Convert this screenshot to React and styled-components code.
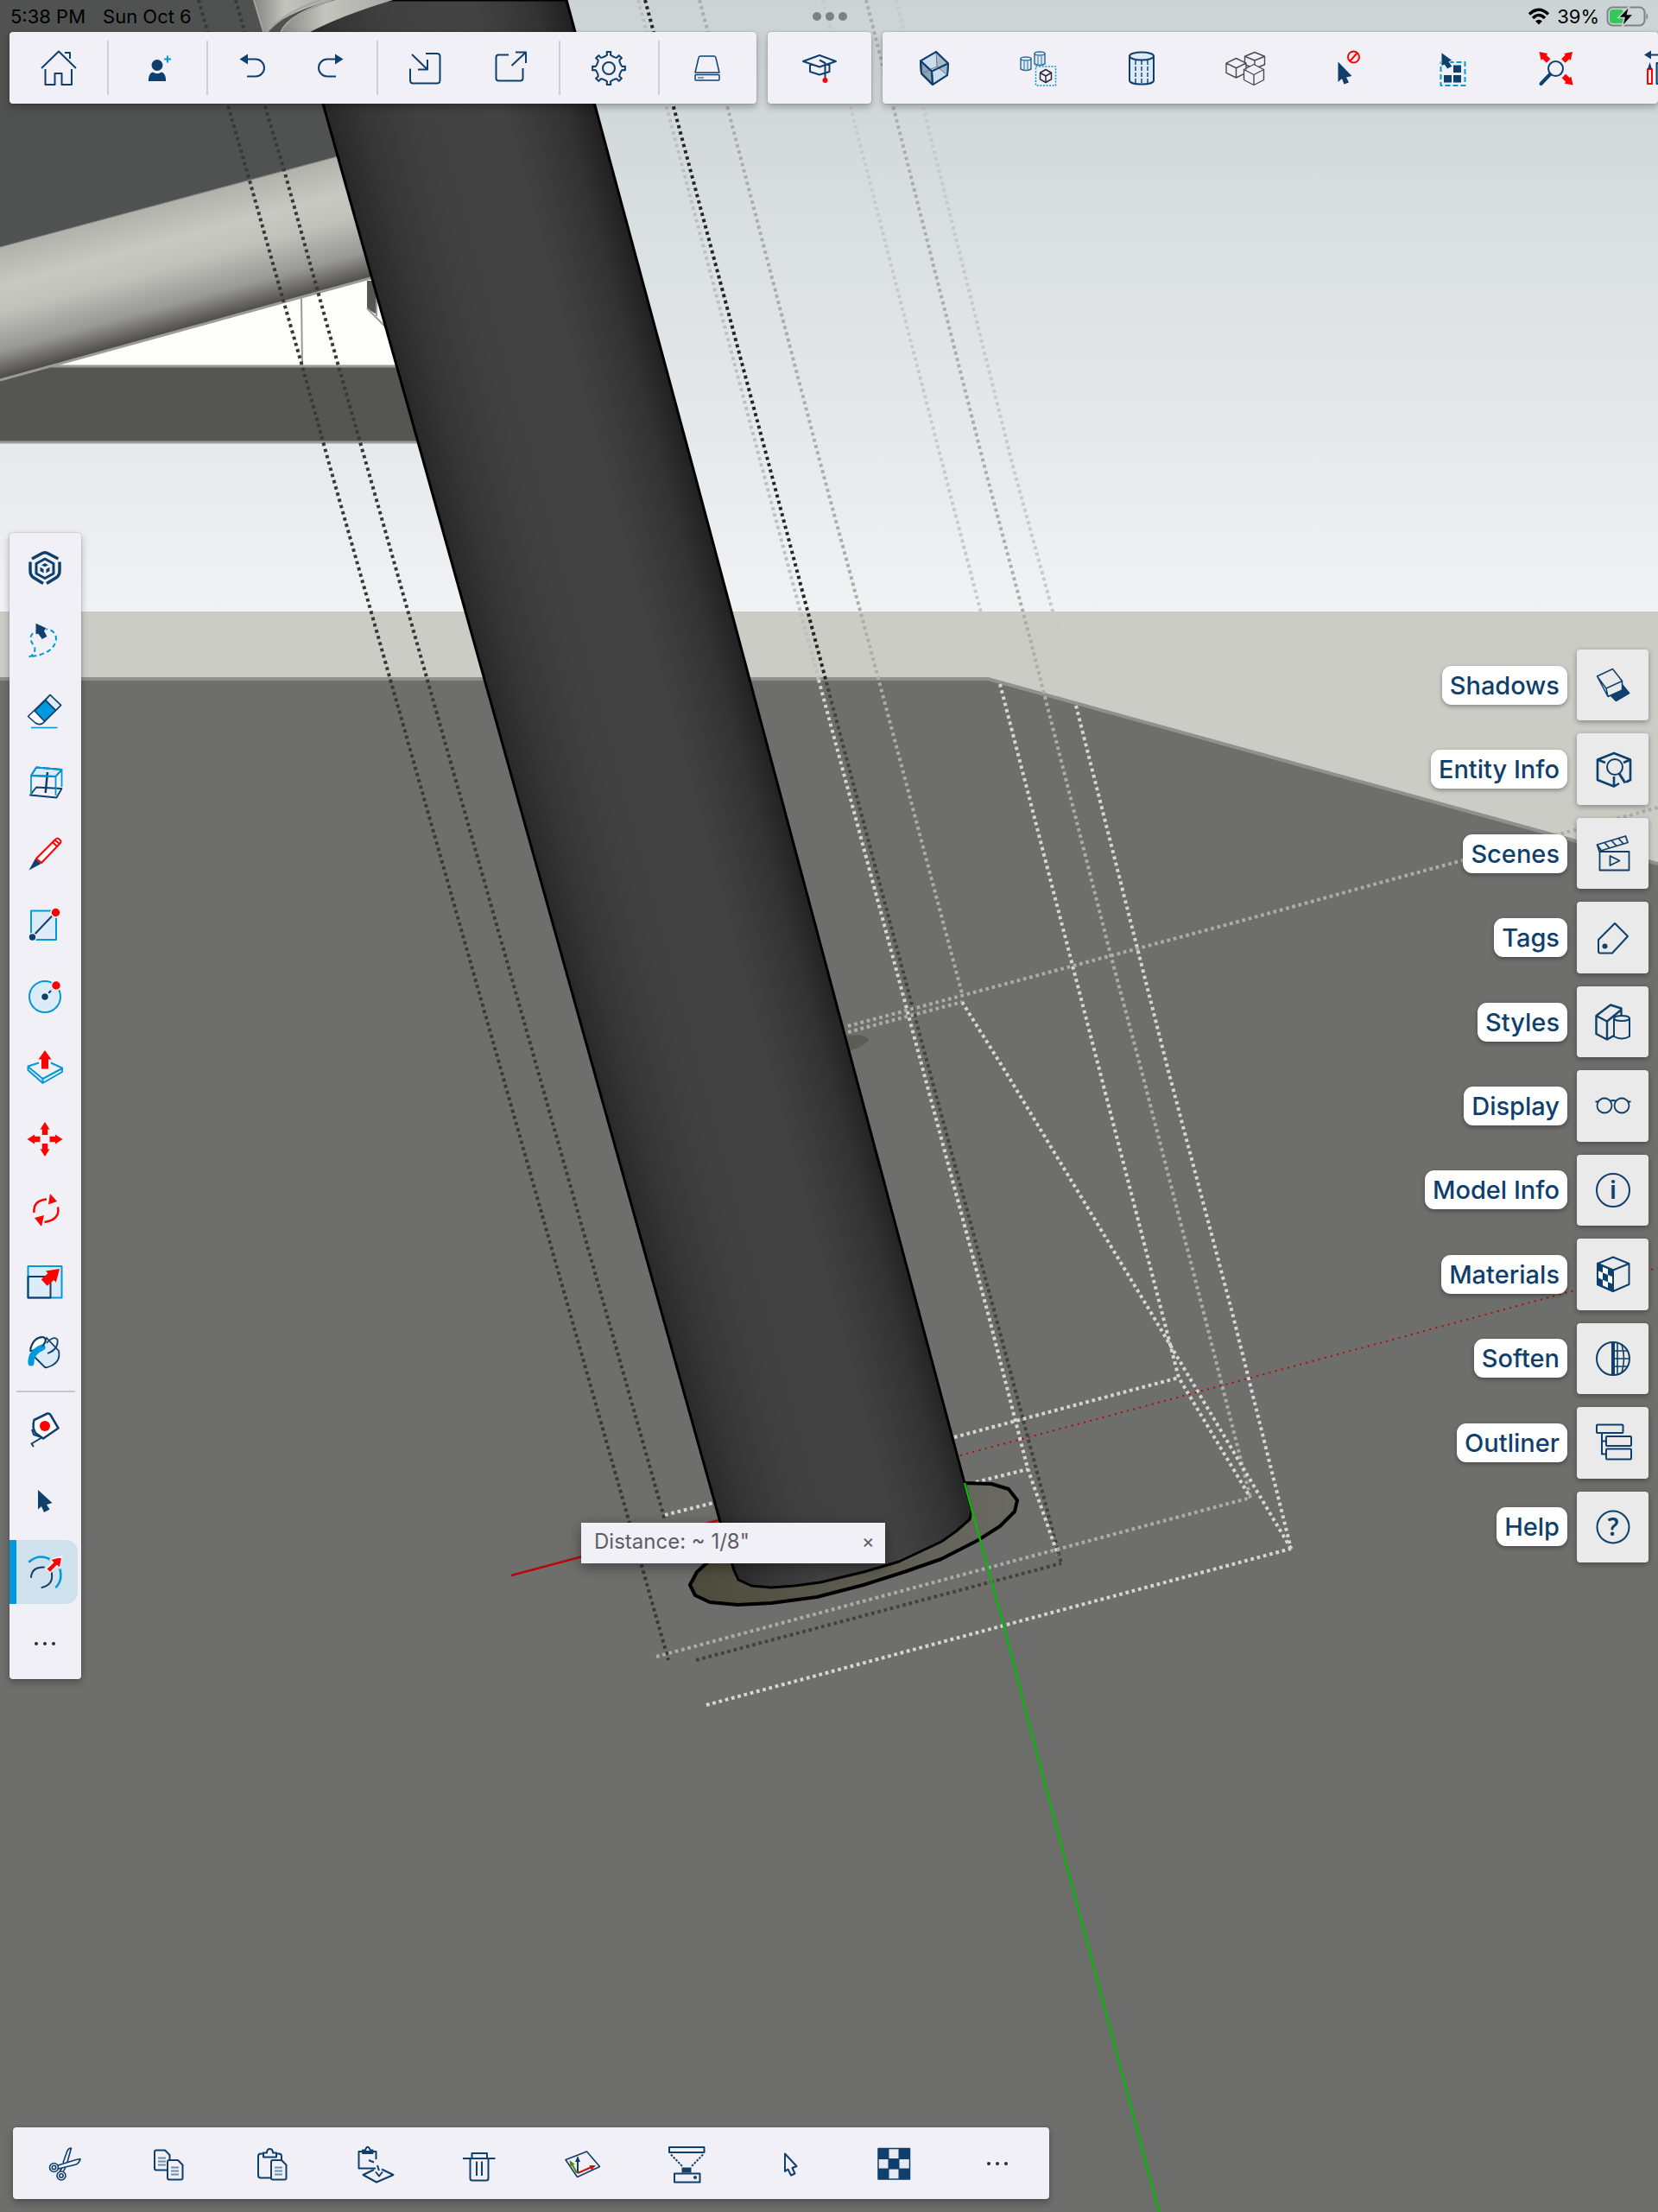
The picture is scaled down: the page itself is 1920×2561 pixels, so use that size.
import React from 'react';
import styled, { createGlobalStyle, css } from 'styled-components';

const NAVY = '#0f3f6c';
const BLUE = '#0099db';
const RED = '#ff0000';
const PALE = '#dbebf7';
const PANEL = '#f1f0f6';

const GlobalStyle = createGlobalStyle`
  * { box-sizing: border-box; }
  html, body { margin: 0; padding: 0; }
  body { font-family: Inter, "Liberation Sans", sans-serif; color: ${NAVY}; }
  button { font: inherit; color: inherit; border: 0; background: none; padding: 0; margin: 0; cursor: pointer; }
`;

/* ---------- layout ---------- */

const Page = styled.div`
  position: relative;
  display: flex;
  flex-direction: column;
  min-height: 100vh;
  overflow: hidden;
  background: #6e6e6c;
`;

const Viewport = styled.svg`
  position: absolute;
  inset: 0;
  width: 100%;
  height: 100%;
`;

const StatusBar = styled.header`
  position: relative;
  display: grid;
  grid-template-columns: 1fr auto 1fr;
  align-items: center;
  height: 37px;
  padding: 0 10px 0 12px;
  font-size: 22px;
  color: #000;
`;

const StatusLeft = styled.div`
  display: flex;
  gap: 20px;
`;

const StatusRight = styled.div`
  display: flex;
  align-items: center;
  justify-content: flex-end;
  gap: 8px;
`;

const Multitask = styled.div`
  display: flex;
  gap: 5px;
`;

const MultitaskDot = styled.span`
  width: 10px;
  height: 10px;
  border-radius: 50%;
  background: #7a8184;
`;

const panel = css`
  background: ${PANEL};
  border-radius: 4px;
  box-shadow: 0 4px 8px rgba(0, 0, 0, 0.28), 0 0 2px rgba(0, 0, 0, 0.25);
`;

const TopBars = styled.div`
  position: relative;
  display: flex;
  gap: 13px;
  padding-left: 11px;
`;

const Toolbar = styled.nav`
  ${panel}
  display: flex;
  align-items: center;
  height: 83px;
  flex: ${(p) => (p.$fill ? '1 1 0' : 'none')};
  min-width: 0;
  overflow: ${(p) => (p.$fill ? 'hidden' : 'visible')};
`;

const ToolGroup = styled.div`
  display: flex;
  justify-content: center;
  align-items: center;
  width: ${(p) => p.$width}px;
  height: 63px;
  & + & { box-shadow: inset 2px 0 #cfcfd6; }
`;

const ToolButton = styled.button`
  display: flex;
  flex: none;
  align-items: center;
  justify-content: center;
  width: ${(p) => p.$width || 120}px;
  height: 63px;
`;

const Main = styled.main`
  position: relative;
  display: flex;
  flex: 1;
  align-items: center;
  justify-content: space-between;
  padding: 0 11px 22px;
`;

const Rail = styled.nav`
  ${panel}
  display: flex;
  flex-direction: column;
  width: 83px;
  height: 1327px;
`;

const RailButton = styled.button`
  display: flex;
  flex: 1;
  align-items: center;
  padding: 4px 0;
`;

const RailFace = styled.span`
  display: flex;
  align-items: center;
  width: 79px;
  height: 100%;
  padding-left: 9px;
  border-left: 8px solid ${(p) => (p.$active ? BLUE : 'transparent')};
  border-radius: 0 14px 14px 0;
  background: ${(p) => (p.$active ? '#cfe1ec' : 'transparent')};
`;

const RailDivider = styled.hr`
  width: 68px;
  height: 2px;
  margin: 2px auto;
  border: 0;
  background: #c6c6cc;
`;

const Trays = styled.nav`
  display: grid;
  grid-auto-rows: 1fr;
  gap: 15px;
  height: 1057px;
`;

const Tray = styled.button`
  display: flex;
  align-items: center;
  justify-content: flex-end;
  gap: 11px;
`;

const TrayLabel = styled.span`
  padding: 0 9px;
  border-radius: 11px;
  background: #fff;
  box-shadow: 0 2px 5px rgba(0, 0, 0, 0.35);
  font-size: 29px;
  font-weight: 500;
  line-height: 45px;
`;

const TrayIcon = styled.span`
  display: flex;
  align-items: center;
  justify-content: center;
  width: 83px;
  height: 100%;
  border-radius: 4px;
  background: #eaeaea;
  box-shadow: 0 2px 6px rgba(0, 0, 0, 0.35);
`;

const BottomBar = styled.footer`
  position: relative;
  display: flex;
  padding: 0 15px 15px;
`;

const Measurement = styled.div`
  position: absolute;
  left: 673px;
  top: 1763px;
  display: flex;
  align-items: center;
  justify-content: space-between;
  width: 352px;
  height: 47px;
  padding: 0 13px 5px 15px;
  background: ${PANEL};
  box-shadow: 0 4px 16px rgba(0, 0, 0, 0.4);
  font-size: 24px;
  color: #5d5c68;
`;

const CloseButton = styled.button`
  width: 14px;
  font-size: 22px;
`;

/* ---------- icons ---------- */

const Svg = styled.svg`
  display: block;
  width: 48px;
  height: 48px;
  overflow: visible;
  fill: none;
  stroke: ${NAVY};
  stroke-width: ${(p) => p.$weight};
  stroke-linejoin: round;
`;

const Icon = ({ children, weight = 2 }) => (
  <Svg viewBox="0 0 48 48" aria-hidden="true" $weight={weight}>{children}</Svg>
);

const gearPath = (() => {
  const pts = [];
  for (let i = 0; i < 8; i++) {
    const a = (i * Math.PI) / 4 - Math.PI / 2;
    [[-0.27, 14.5], [-0.13, 15.5], [-0.12, 19], [0.12, 19], [0.13, 15.5], [0.27, 14.5]].forEach(([d, r]) => {
      pts.push(`${(24 + r * Math.cos(a + d)).toFixed(1)} ${(24 + r * Math.sin(a + d)).toFixed(1)}`);
    });
  }
  return `M${pts.join('L')}Z`;
})();

const Hex = ({ cx, top, w, h, ...rest }) => {
  const q = h / 4;
  return (
    <path
      {...rest}
      d={`M${cx - w} ${top + q}L${cx} ${top}L${cx + w} ${top + q}V${top + 3 * q}L${cx} ${top + h}L${cx - w} ${top + 3 * q}ZM${cx - w} ${top + q}L${cx} ${top + 2 * q}L${cx + w} ${top + q}M${cx} ${top + 2 * q}V${top + h}`}
    />
  );
};

const Arrow = ({ x, y, deg, size = 1 }) => (
  <path
    transform={`translate(${x} ${y}) rotate(${deg}) scale(${size})`}
    d="M0 0L5.500 8.500H3.200V15H-3.200V8.500H-5.500Z"
    fill={RED}
    stroke="none"
  />
);

const Dots = () => (
  <Icon>
    <g fill="#2b2b3a" stroke="none">
      <circle cx="14" cy="24" r="2" /><circle cx="24" cy="24" r="2" /><circle cx="34" cy="24" r="2" />
    </g>
  </Icon>
);

const icons = {
  home: <Icon><path d="M4 24L24 4.500L44 24M31 6H37V13M8.500 25V43H19.500V30H27.500V43H39V25" /></Icon>,
  invite: <Icon><g fill={NAVY} stroke="none"><circle cx="24" cy="20.500" r="6.500" /><path d="M14 39V36Q15 29 19 28.500Q24 32 29 28.500Q33 29 34 36V39Z" /></g><path d="M36 9.500V17.500M32 13.500H40" stroke={BLUE} /></Icon>,
  undo: <Icon><path d="M9.500 13.500L19 7.500V19.500Z" fill={NAVY} stroke="none" /><path d="M18 13.500H28A10 10 0 0 1 28 33.500H18" /></Icon>,
  redo: <Icon><path d="M38.500 13.500L29 7.500V19.500Z" fill={NAVY} stroke="none" /><path d="M30 13.500H20A10 10 0 0 0 20 33.500H30" /></Icon>,
  importFile: <Icon><path d="M25 7H38Q41.500 7 41.500 10.500V38Q41.500 41.500 38 41.500H10.500Q7 41.500 7 38V24.500M9 8L26.500 25M27 14V25.500H16" /></Icon>,
  exportFile: <Icon><path d="M22 8.500H10.500Q7.500 8.500 7.500 11.500V35.500Q7.500 38.500 10.500 38.500H35.500Q38.500 38.500 38.500 35.500V24M25.500 21L42 5.500M30 5.500H42V18" /></Icon>,
  gear: <Icon><path d={gearPath} /><circle cx="24" cy="24" r="7" /></Icon>,
  drive: <Icon weight={1.5}><path d="M14 12Q14.500 10 16 10H32Q33.500 10 34 12L38 29H10Z" /><rect x="10" y="31.500" width="28" height="6.500" rx="1" /><path d="M13 35H20" strokeWidth="1" /></Icon>,
  learn: <Icon><path d="M5 16L24 9L43 16L24 22.500ZM13 19V28L24 31.500L35.500 28V19" /><path d="M24 14.500L30.500 18V37" /><circle cx="30.500" cy="38" r="3" fill={RED} stroke="none" /></Icon>,
  xray: <Icon><path d="M8 15.500L26 5L40 18.500L39 32L22 43L9 30Z" fill="#c9dded" /><path d="M8 15.500L21 27.500L22 43L9 30Z" fill="#8ba3b6" /><path d="M26 5L40 18.500L39 32L27 22Z" fill="#a5bacb" stroke="none" /><path d="M26 5L27 22L39 32M27 22L9 30" strokeWidth="1" stroke="#777" /><path d="M8 15.500L21 27.500L40 18.500M21 27.500L22 43M8 15.500L26 5L40 18.500L39 32L22 43L9 30Z" /></Icon>,
  hideRest: <Icon weight={1.5}>
    {[[4, 13], [20, 7]].map(([x, y]) => (
      <g key={x} fill={PALE} stroke="#376d96"><path d={`M${x} ${y}V${y + 12}Q${x + 6} ${y + 15} ${x + 12} ${y + 12}V${y}`} /><ellipse cx={x + 6} cy={y} rx="6" ry="2" /><path d={`M${x + 4} ${y + 3}V${y + 12}M${x + 8} ${y + 3}V${y + 12}`} strokeWidth="1" /></g>
    ))}
    <rect x="21.500" y="22" width="23" height="22" stroke={BLUE} strokeDasharray="2 1.600" /><Hex cx={33} top={25.5} w={6.5} h={15} stroke="#2b2b3a" />
  </Icon>,
  hiddenGeometry: <Icon><path d="M10 10V38C10 44 38 44 38 38V10" fill={PALE} /><ellipse cx="24" cy="10" rx="14" ry="4.500" fill={PALE} /><path d="M17 15V41M24 15V42M31 15V41" strokeDasharray="5 2" strokeWidth="1.400" /></Icon>,
  components: <Icon>
    <g fill={PANEL} stroke="#4a4a55" strokeWidth="1.400"><Hex cx={35} top={5.5} w={11.500} h={19} /><Hex cx={13.5} top={12.5} w={11.500} h={22.5} /><Hex cx={34} top={19.5} w={11.500} h={24} /></g>
  </Icon>,
  deselect: <Icon><path d="M11.500 16.500V40L16 36L18.500 42.500L24 40.500L21 34.500L27.500 33Z" fill={NAVY} stroke="none" /><circle cx="29.500" cy="11" r="6.500" stroke={RED} /><path d="M25 16L34 6" stroke={RED} /></Icon>,
  selectAll: <Icon><rect x="10.500" y="17" width="28" height="27" stroke={BLUE} strokeDasharray="6 3" /><g fill={NAVY} stroke="none"><rect x="25" y="20.500" width="9" height="8.500" /><rect x="14" y="32" width="9" height="8.500" /><rect x="25" y="32" width="9" height="8.500" /></g><path d="M11 5.500V22L14.500 20L18 25L24 22L20 16.500L24 15Z" fill={NAVY} stroke={PANEL} strokeWidth="1" /></Icon>,
  zoomExtents: <Icon><circle cx="23.500" cy="24.500" r="8.500" /><path d="M17 31L6.500 42" strokeWidth="4" strokeLinecap="round" /><Arrow x={4.5} y={5} deg={-45} /><Arrow x={43} y={5} deg={45} /><Arrow x={43.5} y={43.500} deg={135} /></Icon>,
  catalogue: <Icon><path d="M6 8.500L14 3.500V13.500Z" fill={NAVY} stroke="none" /><path d="M12 8.500H36" /><rect x="10" y="25" width="5" height="17" stroke={RED} /><path d="M12.500 17L15 25H10Z" fill={NAVY} stroke="none" /><rect x="20.500" y="18" width="20" height="24" fill="#7cc4ea" /></Icon>,

  logo: <Icon weight={3.5}><path d="M9 13L20 7Q24 4.500 28 7L39.500 13M7 16.500V27Q7 32 10.500 34.500L22 41.500M41 16.500V27Q41 32 37.500 34.500L26 41.500" /><path d="M24 13L34 18.500V30L24 35.500L14 30V18.500Z" strokeWidth="3" /><path fill={NAVY} stroke="none" d="M24 18L28 20.200L24 22.300L20 20.200ZM18.500 22.500L22.500 25V29.500L18.500 27ZM29.500 22.500L25.500 25V29.500L29.500 27Z" /></Icon>,
  lasso: <Icon><path d="M5.500 43.500Q14 41 12 31Q6 25 8 19Q12 12 24 11Q36 12 37 22Q36 40 5.500 43.500" stroke={BLUE} strokeDasharray="5.500 3.500" /><path d="M13 4V18L16 17L20.700 23.500L27 20L23.500 13.500L26 10Z" fill={NAVY} stroke={PANEL} strokeWidth="1" /></Icon>,
  eraser: <Icon weight={1.6}><path d="M4.500 30.500L30 5.500L42.500 17.500L24 36Q19 42 13 38Z" fill="#fff" /><path d="M24.700 11.500L30 5.500L42.500 17.500L36.500 23.500Z" fill={PALE} /><path d="M12 24L24.700 12L36.500 23.500L23.500 36Z" fill={BLUE} /><path d="M8 43.500H38.500" stroke={BLUE} /></Icon>,
  section: <Icon weight={1.8}><path d="M7 38.500L37.500 41.500L43.500 31L14 29.500Z" /><path d="M8 16L14 6.500L43.500 9L36.500 17Z" fill={PALE} /><path d="M27 12L24.700 36" strokeWidth="2.500" /><path d="M8 38V16L14 6.500L43.500 9V29M8 16L36.500 17L43.500 9M36.500 17V39" stroke={BLUE} /></Icon>,
  pencil: <Icon><path d="M5.500 42.500L13 29L19.500 35Z" fill={NAVY} stroke="none" /><path d="M14 29L35.500 7.500Q38 4 41 7Q44 9 41 12L20 34ZM33 10L38 15M35.500 7.500L41 12" stroke={RED} fill="#fff" /></Icon>,
  rectangle: <Icon><rect x="8" y="7.500" width="29" height="33.500" fill={PALE} stroke={BLUE} /><path d="M9 38L36 9.500" /><circle cx="36.500" cy="9.500" r="5.500" fill={RED} stroke={PANEL} strokeWidth="1.500" /><circle cx="9.500" cy="38" r="4.500" fill={NAVY} stroke={PANEL} strokeWidth="1.500" /></Icon>,
  circle: <Icon><circle cx="24" cy="24" r="18" fill={PALE} stroke={BLUE} /><path d="M24 24L37 11" strokeDasharray="4 2" /><circle cx="37" cy="11" r="5.500" fill={RED} stroke={PANEL} strokeWidth="1.500" /><circle cx="24" cy="24" r="4.500" fill={NAVY} stroke={PANEL} strokeWidth="1.500" /></Icon>,
  pushPull: <Icon><path d="M17 18.500L4.500 22.500V27L21.500 42L44 29V24.500L31 18.500M4.500 23L21.500 37L44 25M21.500 37V42" stroke={BLUE} /><path d="M24 4L31.500 14.500H28V25.500H20V14.500H16.500Z" fill={RED} stroke="none" /></Icon>,
  move: <Icon><Arrow x={24} y={4} deg={0} /><Arrow x={44.500} y={24} deg={90} /><Arrow x={24} y={44} deg={180} /><Arrow x={3.500} y={24} deg={270} /></Icon>,
  rotate: <Icon weight={2.5}><path d="M11.500 27Q10 13 26 11.500M39 20.500Q42 35 23.500 38" stroke={RED} /><path d="M30 5L38 14L28 17.500ZM20 43L12 33L23 30Z" fill={RED} stroke="none" /></Icon>,
  scale: <Icon><rect x="4.500" y="6" width="39" height="36.500" fill={PALE} stroke={BLUE} /><rect x="4.500" y="18" width="26" height="24.500" /><Arrow x={41} y={9} deg={48} size={1.600} /></Icon>,
  paint: <Icon weight={1.8}><path d="M8 23L26 7L40 22Q43 36 27 41Q24 42 22 39L9 26" fill={PALE} /><path d="M7 22Q10 6 22 6Q28 8 22 15Q15 22 7 22Z" fill="#fff" /><path d="M8 36Q7 24 21 18" stroke={BLUE} strokeWidth="7" strokeLinecap="round" /><path d="M7 20Q11 6 22 6Q28 9 21 17M26 13Q34 4 38.500 9Q40 20 27 25" /></Icon>,
  tape: <Icon><path d="M11.500 13L27 5.500Q29.500 5 31 8L39.500 22.500L22 34.500L13 28Q9 22 11.500 13Z" fill="#fff" strokeWidth="2.500" /><path d="M9 24L11 30L20 33M21 33L8.500 40.500L11 44" /><circle cx="24" cy="20" r="6" fill={RED} stroke="none" /></Icon>,
  select: <Icon><path d="M16 11V33.500L20 30L23 37L29.500 33.500L26 28L32.500 26Z" fill={NAVY} stroke="none" /></Icon>,
  offset: <Icon><path d="M6 12Q18 2 31 10M40 16Q46 32 37 41.500" stroke={BLUE} strokeWidth="2.500" strokeLinecap="round" /><path d="M8 30Q9 18 23 18.500M31 22Q36 38 20.500 42" strokeLinecap="round" /><path d="M44 6L41.500 20L38 16.500L30 25L25.500 20.500L33.500 13L30 9.500Z" fill={RED} stroke="#f7f3f7" strokeWidth="1.500" /></Icon>,
  more: <Dots />,

  shadows: <Icon weight={1.5}><path d="M34 23L42.700 33.600L27.300 42.500L21 36Z" fill={NAVY} /><path d="M5.500 14L23.500 5.500L34.500 19.500V30L18 37.500ZM16 28L34.500 19.500M16 28L18 37.500M5.500 14L16 28" fill="#eaeaea" /></Icon>,
  entity: <Icon><path d="M31 40L25 43.500L6 36V12.500L25 5L44 12.500V36L39 38.500M6 12.500L15 16M44 12.500L36 16M25 32V43" strokeWidth="2.600" /><circle cx="26" cy="21" r="9" fill="#eaeaea" /><path d="M31 28.500L38 39.500" strokeWidth="3" /></Icon>,
  scenes: <Icon weight={1.8}><rect x="8.500" y="22" width="34" height="21.500" /><path d="M5.500 14L38.500 4L41 11.500L8 21.500ZM5.500 14L10 20M14 11.500L20 18M22 9L28 15.500M30 6.500L36 13M20.500 27L31.500 32.500L20.500 38Z" /></Icon>,
  tags: <Icon><path d="M26 7L41 22L23 41.500H9Q7 41.500 7 39.500V26Z" /><circle cx="14.500" cy="33.500" r="3" fill={NAVY} stroke="none" /></Icon>,
  styles: <Icon><path d="M25 40L17 44.500L4.500 38V17L21 4.500L33.500 8.500V16M4.500 17L17 23.500L33.500 10M17 23.500V44" strokeWidth="2.400" /><path d="M25 20V41Q34 46 43 41V20" fill="#eaeaea" /><ellipse cx="34" cy="20" rx="9" ry="3" fill="#eaeaea" /></Icon>,
  display: <Icon weight={1.8}><circle cx="14" cy="24" r="8.500" /><circle cx="34" cy="24" r="8.500" /><path d="M3.500 19.500H7M41 19.500H44.500M20.500 19Q24 17 27.500 19" /></Icon>,
  info: <Icon><circle cx="24" cy="24" r="19" /><text x="24" y="34" textAnchor="middle" fontFamily="Noto Sans, sans-serif" fontSize="28" fontWeight="600" fill={NAVY} stroke="none">i</text></Icon>,
  materials: <Icon><path d="M6 12L24 19.500V44L6 36Z" fill="#fff" /><g fill={NAVY} stroke="none"><path d="M6 12L12 14.500V22.600L6 20ZM18 17L24 19.500V27.600L18 25.100ZM12 22.600L18 25.100V33.300L12 30.700ZM6 28L12 30.700V38.700L6 36ZM18 33.300L24 35.800V44L18 41.400Z" /></g><path d="M6 12L24 4.500L42.500 12V36L24 44L6 36ZM6 12L24 19.500L42.500 12M24 19.500V44" /></Icon>,
  soften: <Icon><circle cx="24" cy="24" r="19" /><path d="M24 5V43" strokeWidth="4" /><path d="M29 6V42M34 8Q39 24 34 40M25 15H40M25 24H43M25 33H40" strokeWidth="1.600" /></Icon>,
  outliner: <Icon><rect x="5" y="3.500" width="30.500" height="9.500" rx="1" /><rect x="16" y="17" width="29" height="11" rx="1" /><rect x="16" y="31.500" width="29" height="12" rx="1" /><path d="M11 13V37.500H16M11 22.500H16" /></Icon>,
  help: <Icon><circle cx="24" cy="24" r="18.500" /><text x="24" y="34" textAnchor="middle" fontFamily="Noto Sans, sans-serif" fontSize="28" fontWeight="600" fill={NAVY} stroke="none">?</text></Icon>,

  cut: <Icon weight={1.6}><circle cx="11.500" cy="28.500" r="5" /><circle cx="11.500" cy="28.500" r="2.200" /><circle cx="20" cy="38" r="5" /><circle cx="20" cy="38" r="2.200" /><path d="M16 26L37 19.500L42 18.500Q41 23 37 25L16.500 30M22 23L27 9Q28.500 6 31.500 6L27 22M25 28L22.500 33M21 29L18 33" /></Icon>,
  copy: <Icon><path d="M10 8.500H20L25.500 14V31.500H10Q8 31.500 8 29.500V10.500Q8 8.500 10 8.500Z" /><path d="M12 17.500H21M12 21.500H21M12 25.500H21" stroke="#6d8dab" /><path d="M25 20H35L40.500 25.500V40.500Q40.500 42.500 38.500 42.500H25Q23 42.500 23 40.500V22Q23 20 25 20Z" fill={PANEL} /><path d="M27 28.500H36M27 32.500H36M27 36.500H36" stroke="#6d8dab" /></Icon>,
  paste: <Icon><rect x="8" y="12.500" width="27" height="28" rx="3" /><path d="M14 16.500V11.500H18Q18 7 21.500 7Q25 7 25 11.500H29V16.500Z" fill={PANEL} /><path d="M25 20H35L40.500 25.500V40.500Q40.500 42.500 38.500 42.500H25Q23 42.500 23 40.500V22Q23 20 25 20Z" fill={PANEL} /><path d="M27 28.500H36M27 32.500H36M27 36.500H36" stroke="#6d8dab" /></Icon>,
  pasteInPlace: <Icon><path d="M24.500 19V10H4.500V29.500H24M9 12V8.500H12Q14.500 1 18 8.500H20.500V12ZM16 20L22 22.500M26 26L28 32M24 33.500L28 38.500L32 33.500" /><path d="M22 31L9.500 37L25 45.500L44.500 37L31 30.500" /></Icon>,
  trash: <Icon><path d="M5 18H42.500M15.500 18V12H33V18M13.500 18V41Q13.500 43.500 16 43.500H32Q34.500 43.500 34.500 41V18M21 21.500V38M27 21.500V38" /></Icon>,
  axes: <Icon><path d="M4 19.500L28.500 10L43.500 27.500L17.500 39.500Z" strokeWidth="1.600" /><path d="M18 35V20" /><path d="M18 15L21 22H15Z" fill={NAVY} stroke="none" /><path d="M17 35L11 24" stroke="#4a8a18" /><path d="M8.500 20L14.500 24.500L9.500 27.500Z" fill="#4a8a18" stroke="none" /><path d="M18 35L34 28" stroke="#cc1010" /><path d="M39 26L34 31.500L31.500 26Z" fill="#cc1010" stroke="none" /></Icon>,
  scan: <Icon><rect x="4" y="5" width="40.500" height="6" /><path d="M6 13.500L19 27M43 13.500L30 27" strokeDasharray="2.500 1.500" /><rect x="18.500" y="28.500" width="11" height="6" fill={NAVY} stroke="none" /><rect x="10" y="35.500" width="29.500" height="10" /><circle cx="34" cy="40" r="2" fill={NAVY} stroke="none" /></Icon>,
  pointer: <Icon><path d="M18 12.500V33L21.500 30.500L25 37.500L29.500 35.500L26.500 29L31.500 27Z" /></Icon>,
  checker: <Icon><rect x="6" y="6.500" width="36.500" height="35.500" fill="#e7eaf1" strokeWidth="1.500" /><path fill={NAVY} stroke="none" d="M6 6.500H18V18.500H6ZM30 6.500H42.500V18.500H30ZM18 18.500H30V30H18ZM6 30H18V42H6ZM30 30H42.500V42H30Z" /><path d="M6 18.500H42M6 30H42M18 6V42M30 6V42" strokeWidth="1" /></Icon>,
};

/* ---------- model view ---------- */

const ink = {
  dark: '#383838',
  black: '#262626',
  white: '#d6d6d3',
  grey: '#acaca8',
  faint: '#bcbfbe',
  faintest: '#c8cac7',
};

const guides = [
  ['230,0 264,122 289,209 327,344 350,424 382,540 774,1922', ink.dark],
  ['273,0 306,120 329,197 369,341 392,424 425,540 770,1760', ink.dark],
  ['747,0 891,540 957,790', ink.black],
  ['957,790 1063,1190 1153,1524 1229,1810', '#414141'],
  ['739,0 882,540 948,787', ink.faint],
  ['948,787 1050,1168 1145,1524 1190,1700 1225,1800', ink.white],
  ['810,0 951,540 1005,740 1114,1150', ink.grey],
  ['953,0 1092,540 1144,740', ink.faintest],
  ['1158,792 1365,1595 1448,1734', ink.white],
  ['1003,0 1140,540 1193,740 1286,1105 1322,1240 1394,1520 1448,1734', ink.grey],
  ['1038,0 1173,540 1228,740', ink.faintest],
  ['1246,817 1353,1240 1427,1520 1495,1793', ink.white],
  ['1114,1160 1164,1240 1333,1520 1495,1793', ink.white],
  ['982,1188 1460,1060 1620,1016 1920,935', ink.grey],
  ['982,1195 1114,1160', ink.grey],
  ['1105,1664 1365,1595', ink.white],
  ['1130,1716 1190,1701', ink.white],
  ['770,1754 830,1739', ink.white],
  ['760,1918 1448,1734', ink.grey],
  ['806,1922 1229,1810', '#414141'],
  ['818,1974 1495,1793', ink.white],
];

function Model() {
  return (
    <Viewport viewBox="0 0 1920 2561" preserveAspectRatio="xMidYMid slice" role="img" aria-label="3D model view">
      <defs>
        <linearGradient id="sky" x1="0" y1="0" x2="0" y2="1">
          <stop offset="0" stopColor="#ccd3d5" />
          <stop offset="1" stopColor="#f0f2f4" />
        </linearGradient>
        <linearGradient id="beam" gradientUnits="userSpaceOnUse" x1="0" y1="286" x2="39" y2="430">
          <stop offset="0" stopColor="#b0b1ab" />
          <stop offset="0.3" stopColor="#c8c9c3" />
          <stop offset="0.5" stopColor="#c0c1bb" />
          <stop offset="0.78" stopColor="#989894" />
          <stop offset="1" stopColor="#484644" />
        </linearGradient>
        <linearGradient id="leg" gradientUnits="userSpaceOnUse" x1="374" y1="120" x2="665" y2="40">
          <stop offset="0" stopColor="#282828" />
          <stop offset="0.14" stopColor="#363636" />
          <stop offset="0.35" stopColor="#414141" />
          <stop offset="0.65" stopColor="#434343" />
          <stop offset="0.88" stopColor="#333" />
          <stop offset="1" stopColor="#212121" />
        </linearGradient>
        <linearGradient id="foot" x1="0" y1="0" x2="1" y2="0">
          <stop offset="0" stopColor="#4d4b3b" />
          <stop offset="1" stopColor="#6b6a62" />
        </linearGradient>
        <linearGradient id="collar" x1="0" y1="0" x2="1" y2="0">
          <stop offset="0" stopColor="#858581" />
          <stop offset="0.4" stopColor="#c3c4be" />
          <stop offset="1" stopColor="#a9aaa5" />
        </linearGradient>
      </defs>

      <rect width="1920" height="708" fill="url(#sky)" />
      <rect y="708" width="1920" height="292" fill="#cbccc6" />
      <path d="M0 786H1144L1920 1000V2561H0Z" fill="#6e6e6c" />
      <path d="M0 786H1144L1920 1000" fill="none" stroke="#90918c" strokeWidth="4" />

      <path d="M0 0H560V424H0Z" fill="#505251" />
      <path d="M60 424L430 318L480 424Z" fill="#fefffb" />
      <path d="M0 424H500V511H0Z" fill="#555552" />
      <path d="M0 512H500M60 424H480" stroke="#9a9a96" strokeWidth="3" fill="none" />
      <path d="M349 345L350 424" stroke="#999" strokeWidth="2" />
      <path d="M425 325H436V364L425 357Z" fill="#555552" />
      <path d="M425 357L448 380M436 345V366" stroke="#999" strokeWidth="2" fill="none" />
      <path d="M0 286L390 181L440 200V319L0 439Z" fill="url(#beam)" />
      <path d="M0 286L395 180" stroke="#777" strokeWidth="1" />
      <path d="M0 440L440 319" stroke="#9b9b97" strokeWidth="3" />
      <path d="M978 1199Q1004 1196 1006 1204Q1000 1212 984 1216Z" fill="#5c5b54" />

      <g fill="none" strokeWidth="4" strokeDasharray="3.700 3.800">
        {guides.map(([points, color]) => (
          <polyline key={points} points={points} stroke={color} />
        ))}
      </g>

      <path d="M1112 1685L1285 1639L1620 1549L1920 1468" fill="none" stroke="#b80808" strokeWidth="2" strokeDasharray="2 5.400" />
      <path d="M592 1824L840 1758" stroke="#b80808" strokeWidth="2.500" />

      <path
        d="M1117 1717L1148 1718L1168 1724L1178 1737L1175 1750L1158 1767L1133 1783L1090 1805L1047 1820L1000 1835L946 1849L893 1856L854 1858L822 1855L805 1847L799 1835L807 1820L818 1810L850 1790Z"
        fill="url(#foot)" stroke="#000" strokeWidth="4" strokeLinejoin="round"
      />
      <path
        d="M340 0L374 120L492 540L834 1762L847 1808L850 1818L855 1829L870 1836L893 1838L920 1836L950 1832L1000 1820L1041 1808L1090 1785L1107 1773L1123 1759L1125 1748L1117 1717L802 540L656 0Z"
        fill="url(#leg)" stroke="#000" strokeWidth="3" strokeLinejoin="round"
      />
      <path d="M294 0H385L330 24L307 46Z" fill="url(#collar)" />
      <path d="M294 0L309 50" stroke="#a3a49f" strokeWidth="2" />
      <path d="M307 40Q325 16 385 0H455Q400 16 357 38V60H307Z" fill="#505251" />
      <path d="M324 38Q332 18 388 0H455Q395 18 357 38V60H324Z" fill="url(#collar)" />
      <path d="M307 40Q325 16 371 0M324 44Q324 20 385 0" fill="none" stroke="#a3a49f" strokeWidth="2" />
      <path d="M1117 1717L1162 1881L1198 2020L1342 2561" fill="none" stroke="#0eb40e" strokeWidth="2.500" />
    </Viewport>
  );
}

/* ---------- data ---------- */

const mainGroups = [
  { width: 113, cell: 113, tools: [['home', 'Home']] },
  { width: 115, cell: 115, tools: [['invite', 'Invite people']] },
  { width: 197, cell: 91, tools: [['undo', 'Undo'], ['redo', 'Redo']] },
  { width: 211, cell: 99, tools: [['importFile', 'Import'], ['exportFile', 'Export']] },
  { width: 115, cell: 115, tools: [['gear', 'Settings']] },
  { width: 114, cell: 114, tools: [['drive', 'Storage']] },
];

const modelTools = [
  ['xray', 'X-ray'], ['hideRest', 'Hide rest of model'], ['hiddenGeometry', 'Hidden geometry'],
  ['components', 'Components'], ['deselect', 'Deselect'], ['selectAll', 'Select all'],
  ['zoomExtents', 'Zoom extents'], ['catalogue', 'Catalogue'],
];

const drawTools = [
  ['logo', 'Warehouse'], ['lasso', 'Lasso'], ['eraser', 'Eraser'], ['section', 'Section'],
  ['pencil', 'Line'], ['rectangle', 'Rectangle'], ['circle', 'Circle'], ['pushPull', 'Push/Pull'],
  ['move', 'Move'], ['rotate', 'Rotate'], ['scale', 'Scale'], ['paint', 'Paint'],
];

const recentTools = [['tape', 'Tape measure'], ['select', 'Select'], ['offset', 'Offset'], ['more', 'More tools']];

const trays = [
  ['shadows', 'Shadows'], ['entity', 'Entity Info'], ['scenes', 'Scenes'], ['tags', 'Tags'],
  ['styles', 'Styles'], ['display', 'Display'], ['info', 'Model Info'], ['materials', 'Materials'],
  ['soften', 'Soften'], ['outliner', 'Outliner'], ['help', 'Help'],
];

const editTools = [
  ['cut', 'Cut'], ['copy', 'Copy'], ['paste', 'Paste'], ['pasteInPlace', 'Paste in place'],
  ['trash', 'Delete'], ['axes', 'Axes'], ['scan', 'Scan'], ['pointer', 'Pointer'],
  ['checker', 'Texture'], ['more', 'More actions'],
];

const RailTool = ({ id, label, active }) => (
  <RailButton type="button" aria-label={label} aria-pressed={active}>
    <RailFace $active={active}>{icons[id]}</RailFace>
  </RailButton>
);

export default function App() {
  return (
    <>
      <GlobalStyle />
      <Page>
        <Model />
        <StatusBar>
          <StatusLeft><span>5:38 PM</span><span>Sun Oct 6</span></StatusLeft>
          <Multitask><MultitaskDot /><MultitaskDot /><MultitaskDot /></Multitask>
          <StatusRight>
            <svg width="26" height="20" viewBox="0 0 26 20" aria-hidden="true">
              <path d="M2 7.500Q13 -3 24 7.500M6 12Q13 5 20 12" fill="none" stroke="#000" strokeWidth="3.500" />
              <path d="M13 19.500L9 15.500Q13 12 17 15.500Z" />
            </svg>
            <span>39%</span>
            <svg width="50" height="24" viewBox="0 0 50 24" aria-hidden="true">
              <rect x="1.500" y="1.500" width="43" height="21" rx="6" fill="none" stroke="#7e8486" strokeWidth="2" />
              <path d="M46.500 8Q50 12 46.500 16Z" fill="#7e8486" />
              <rect x="4" y="4" width="16" height="16" rx="3.500" fill="#34c759" />
              <path d="M27 0L14 13.500H21L18.500 24L31.500 9.500H24.500Z" stroke="#cdd3d5" strokeWidth="1.500" />
            </svg>
          </StatusRight>
        </StatusBar>

        <TopBars>
          <Toolbar aria-label="File">
            {mainGroups.map((group) => (
              <ToolGroup key={group.tools[0][0]} $width={group.width}>
                {group.tools.map(([id, label]) => (
                  <ToolButton key={id} type="button" aria-label={label} $width={group.cell}>{icons[id]}</ToolButton>
                ))}
              </ToolGroup>
            ))}
          </Toolbar>
          <Toolbar aria-label="Learning">
            <ToolButton type="button" aria-label="Learn">{icons.learn}</ToolButton>
          </Toolbar>
          <Toolbar aria-label="View" $fill>
            {modelTools.map(([id, label]) => (
              <ToolButton key={id} type="button" aria-label={label}>{icons[id]}</ToolButton>
            ))}
          </Toolbar>
        </TopBars>

        <Main>
          <Rail aria-label="Drawing tools">
            {drawTools.map(([id, label]) => <RailTool key={id} id={id} label={label} />)}
            <RailDivider />
            {recentTools.map(([id, label]) => <RailTool key={id} id={id} label={label} active={id === 'offset'} />)}
          </Rail>
          <Trays aria-label="Panels">
            {trays.map(([id, label]) => (
              <Tray key={id} type="button">
                <TrayLabel>{label}</TrayLabel>
                <TrayIcon>{icons[id]}</TrayIcon>
              </Tray>
            ))}
          </Trays>
        </Main>

        <BottomBar>
          <Toolbar aria-label="Edit">
            {editTools.map(([id, label]) => (
              <ToolButton key={id} type="button" aria-label={label}>{icons[id]}</ToolButton>
            ))}
          </Toolbar>
        </BottomBar>

        <Measurement role="status">
          <span>Distance: ~ 1/8"</span>
          <CloseButton type="button" aria-label="Close measurement">×</CloseButton>
        </Measurement>
      </Page>
    </>
  );
}
